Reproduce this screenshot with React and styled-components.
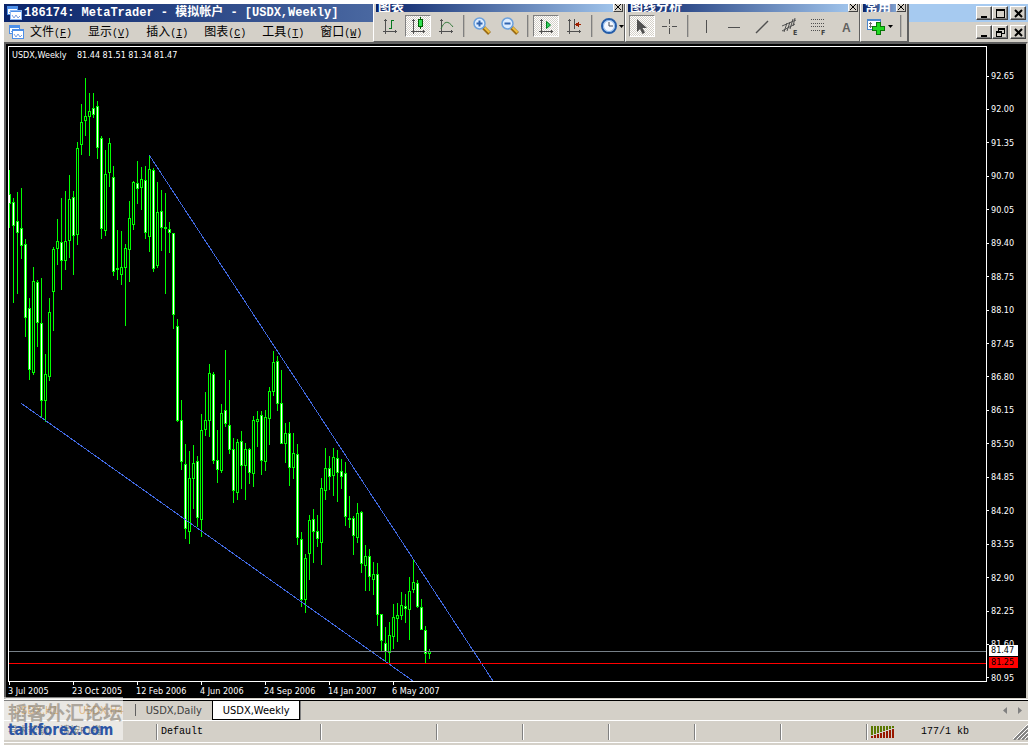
import React from 'react';
import styled, { createGlobalStyle } from 'styled-components';

const GlobalStyle = createGlobalStyle`
  * {
    box-sizing: border-box;
  }
  body {
    margin: 0;
    background: #fff;
    font-family: "DejaVu Sans Condensed", "Noto Sans", "Noto Sans CJK SC", sans-serif;
    font-size: 11px;
    color: #000;
  }
  button {
    margin: 0;
    padding: 0;
    border: 0;
    background: none;
    color: inherit;
    font: inherit;
  }
  svg {
    display: block;
  }
`;

const face = '#d4d0c8';
const mono = '"Liberation Mono", "Noto Sans CJK SC", monospace';

const Page = styled.main`
  padding: 4px 4px 0;
`;

const Window = styled.div`
  position: relative;
  overflow: hidden;
  background: ${face};
`;

const TitleBar = styled.header`
  display: flex;
  align-items: center;
  height: 18px;
  padding: 0 2px 0 3px;
  background: linear-gradient(to right, #0a246a, #a6caf0 88%);
  color: #fff;
`;

const Title = styled.h1`
  flex: 1;
  margin: 0 0 0 2px;
  font: bold 12px/18px ${mono};
  white-space: pre;
`;

const MenuBar = styled.nav`
  display: flex;
  align-items: center;
  height: 20px;
  padding: 0 2px 0 5px;
`;

const Menus = styled.div`
  display: flex;
  flex: 1;
  gap: 16px;
  margin-left: 6px;
`;

const MenuButton = styled.button`
  font: 12px/18px "Noto Sans CJK SC", sans-serif;
  white-space: nowrap;
  span {
    font: 10px/18px ${mono};
  }
`;

const Captions = styled.div`
  display: flex;
`;

const CaptionButton = styled.button`
  display: flex;
  align-items: center;
  justify-content: center;
  width: 16px;
  height: 14px;
  background: ${face};
  border: 1px solid;
  border-color: #fff #404040 #404040 #fff;
  box-shadow: inset -1px -1px 0 #808080;
  color: #000;
  &:last-child {
    margin-left: 2px;
  }
`;

const FloatingBars = styled.div`
  position: absolute;
  top: 0;
  left: 369px;
  display: flex;
  height: 38px;
`;

const ToolWindow = styled.section`
  overflow: hidden;
  background: ${face};
  border: solid;
  border-width: 0 ${props => (props.$last ? 2 : 1)}px 1px 1px;
  border-color: #fff #606060 #606060 #fff;
`;

const ToolTitle = styled.div`
  display: flex;
  align-items: flex-end;
  justify-content: space-between;
  height: 8px;
  margin: 0 1px 0 2px;
  padding-left: 2px;
  overflow: hidden;
  background: linear-gradient(to right, #0a246a, #a6caf0);
  color: #fff;
  font: bold 13px/13px "Noto Sans CJK SC", sans-serif;
`;

const ToolClose = styled.button`
  display: flex;
  align-items: center;
  justify-content: center;
  flex: none;
  width: 10px;
  height: 11px;
  background: ${face};
  border: 1px solid;
  border-color: #fff #404040 #404040 #fff;
  color: #000;
`;

const ToolRow = styled.div`
  display: flex;
  align-items: center;
  gap: 2px;
  padding: 3px ${props => props.$end || 0}px 4px 3px;
`;

const ToolButton = styled.button`
  display: flex;
  align-items: center;
  justify-content: center;
  width: ${props => (props.$wide ? 32 : 26)}px;
  height: 22px;
  border: 1px solid transparent;
  ${props => props.$pressed && `
    border-color: #808080 #fff #fff #808080;
    background: repeating-conic-gradient(#fff 0 25%, ${face} 0 50%) 0 0 / 2px 2px;
  `}
`;

const Divider = styled.span`
  width: 2px;
  height: 22px;
  margin: 0 2px;
  border-left: 1px solid #808080;
  border-right: 1px solid #b8b4ac;
`;

const ChartFrame = styled.section`
  display: grid;
  grid-template-columns: minmax(0, 1fr) 39px;
  padding: 2px 0 0 2px;
  background: #000;
  color: #fff;
  border: 2px solid;
  border-color: #606060 ${face} ${face} #606060;
  font-size: 9px;
  line-height: 12px;
`;

const Plot = styled.div`
  position: relative;
  border: 1px solid #fff;
`;

const Quote = styled.div`
  position: absolute;
  top: 2px;
  left: 3px;
  white-space: pre;
`;

const PriceAxis = styled.div`
  position: relative;
  grid-row: span 2;
  display: flex;
  flex-direction: column;
  justify-content: space-between;
  padding: 24px 0 14px;
`;

const Price = styled.div`
  display: flex;
  align-items: center;
  gap: 2px;
  height: 12px;
  &::before {
    content: "";
    width: 2px;
    height: 1px;
    background: #fff;
  }
`;

const PriceTag = styled.div`
  position: absolute;
  left: 2px;
  top: ${props => props.$top}px;
  width: 29px;
  height: 11px;
  padding-left: 2px;
  line-height: 11px;
  color: #000;
  background: ${props => props.$color};
`;

const TimeAxis = styled.div`
  display: flex;
  height: 16px;
  overflow: hidden;
`;

const Time = styled.div`
  flex: 0 0 64px;
  padding-top: 3px;
  white-space: nowrap;
  background: linear-gradient(#fff, #fff) 1px 0 / 1px 3px no-repeat;
`;

const TabBar = styled.div`
  display: flex;
  align-items: flex-start;
  height: 21px;
  border-top: 1px solid #000;
  border-bottom: 1px solid #fff;
  box-shadow: 0 -1px 0 #fff;
`;

const Tab = styled.button`
  height: 19px;
  padding: 0 10px;
  line-height: 17px;
  white-space: nowrap;
  color: ${props => (props.$active ? '#000' : props.$alert ? '#c07000' : '#404040')};
  ${props => props.$active && `
    background: #fff;
    border: solid #000;
    border-width: 0 1px 1px;
    box-shadow: 1px 0 0 #808080;
  `}
`;

const TabRule = styled.span`
  width: 1px;
  height: 12px;
  margin: 3px 0 0 1px;
  background: #606060;
`;

const TabScroll = styled.div`
  display: flex;
  gap: 11px;
  margin-left: auto;
  padding: 6px 6px 0 0;
`;

const StatusBar = styled.footer`
  display: flex;
  align-items: center;
  height: 22px;
  border-bottom: 1px solid #fff;
  font: 10px/16px ${mono};
`;

const StatusCell = styled.div`
  display: flex;
  align-items: center;
  flex: ${props => (props.$width ? `0 0 ${props.$width}px` : '1 1 0')};
  height: 16px;
  padding-left: 4px;
  overflow: hidden;
  white-space: nowrap;
  & + & {
    border-left: 1px solid #808080;
    box-shadow: inset 1px 0 0 #fff;
  }
`;

const Traffic = styled.span`
  margin-left: 26px;
`;

const BottomEdge = styled.div`
  height: 2px;
`;

const Watermark = styled.div`
  position: absolute;
  left: 0;
  bottom: 5px;
  width: 119px;
  height: 43px;
  padding: 5px 0 0 4px;
  background: rgba(255, 255, 255, 0.5);
  white-space: nowrap;
  pointer-events: none;
`;

const ForumName = styled.div`
  color: rgba(130, 122, 110, 0.6);
  font: bold 19px/20px "Noto Sans CJK SC", sans-serif;
`;

const ForumSite = styled.div`
  color: #2c55a4;
  font: bold 15px/16px "DejaVu Sans Condensed", "Noto Sans", sans-serif;
`;

const menus = [['文件', 'F'], ['显示', 'V'], ['插入', 'I'], ['图表', 'C'], ['工具', 'T'], ['窗口', 'W']];

const prices = [
  '92.65', '92.00', '91.35', '90.70', '90.05', '89.40', '88.75', '88.10', '87.45', '86.80',
  '86.15', '85.50', '84.85', '84.20', '83.55', '82.90', '82.25', '81.60', '80.95',
];

const times = ['3 Jul 2005', '23 Oct 2005', '12 Feb 2006', '4 Jun 2006', '24 Sep 2006', '14 Jan 2007', '6 May 2007'];

// high, body top, body bottom, low, 1 when the week closed down
const candles = [
  [170, 194, 204, 228, 1], [198, 202, 226, 303, 1], [192, 221, 233, 294, 1], [188, 228, 246, 259, 1],
  [239, 244, 318, 337, 1], [298, 308, 370, 380, 1], [267, 281, 373, 375, 0], [280, 282, 323, 347, 1],
  [278, 323, 401, 417, 1], [354, 374, 401, 422, 0], [298, 312, 377, 381, 0], [247, 249, 292, 331, 0],
  [219, 241, 249, 265, 0], [198, 242, 261, 290, 1], [191, 241, 261, 270, 0], [175, 199, 241, 258, 0],
  [191, 197, 236, 275, 1], [142, 148, 235, 245, 0], [104, 122, 145, 155, 0], [78, 116, 121, 136, 0],
  [93, 111, 117, 156, 0], [93, 108, 115, 118, 1], [101, 106, 148, 159, 1], [136, 138, 229, 239, 1],
  [150, 174, 231, 236, 0], [138, 143, 173, 187, 0], [166, 177, 272, 276, 1], [230, 268, 270, 280, 0],
  [231, 267, 275, 285, 0], [244, 248, 268, 326, 0], [201, 218, 250, 282, 0], [181, 182, 225, 230, 0],
  [161, 183, 189, 204, 1], [167, 179, 188, 210, 0], [166, 180, 233, 239, 1], [156, 169, 237, 252, 0],
  [168, 170, 269, 272, 1], [182, 212, 266, 268, 0], [190, 211, 228, 251, 1], [193, 227, 229, 294, 0],
  [222, 229, 233, 253, 1], [233, 233, 315, 329, 1], [319, 326, 421, 422, 1], [400, 420, 462, 470, 1],
  [444, 464, 529, 539, 1], [451, 478, 532, 544, 0], [445, 463, 479, 509, 0], [456, 461, 518, 527, 1],
  [414, 430, 520, 537, 0], [392, 420, 430, 436, 0], [364, 373, 421, 437, 0], [372, 374, 461, 464, 1],
  [430, 460, 470, 483, 1], [404, 413, 471, 473, 0], [350, 410, 424, 427, 1], [380, 425, 450, 454, 1],
  [438, 449, 491, 503, 1], [439, 442, 493, 500, 0], [431, 441, 466, 489, 1], [443, 449, 466, 500, 0],
  [448, 449, 473, 484, 1], [416, 420, 474, 487, 0], [411, 419, 422, 447, 0], [411, 415, 461, 475, 1],
  [410, 417, 462, 471, 0], [387, 391, 419, 445, 0], [351, 362, 392, 396, 0], [356, 361, 404, 411, 1],
  [370, 403, 444, 444, 1], [423, 433, 444, 463, 0], [422, 433, 468, 486, 1], [433, 453, 468, 479, 0],
  [444, 454, 538, 545, 1], [532, 539, 600, 607, 1], [554, 558, 600, 613, 0], [515, 520, 554, 580, 0],
  [509, 519, 532, 563, 1], [515, 531, 539, 547, 1], [478, 488, 543, 565, 0], [448, 468, 491, 500, 0],
  [456, 468, 477, 490, 1], [448, 457, 476, 496, 0], [450, 458, 473, 502, 1], [459, 471, 477, 489, 1],
  [462, 473, 517, 526, 1], [496, 518, 520, 528, 0], [516, 518, 536, 555, 1], [503, 513, 538, 543, 0],
  [511, 512, 564, 573, 1], [545, 556, 566, 591, 0], [549, 556, 577, 591, 1], [562, 574, 580, 595, 0],
  [563, 574, 615, 626, 1], [614, 614, 641, 651, 1], [627, 643, 652, 662, 1], [622, 635, 653, 663, 0],
  [604, 617, 637, 649, 0], [603, 615, 619, 642, 0], [592, 605, 616, 620, 0], [594, 606, 609, 623, 1],
  [577, 591, 610, 640, 0], [559, 582, 590, 593, 0], [580, 583, 607, 608, 1], [599, 607, 630, 630, 1],
  [626, 630, 654, 663, 1], [649, 651, 654, 659, 0],
];

const Candle = ({ x, data: [high, top, bottom, low, down] }) => (
  <g>
    <rect x={x} y={high} width="1" height={low - high} fill="#0f0" />
    <rect x={x - 1} y={top} width="3" height={bottom - top} fill="#0f0" />
    {bottom - top > 2 && (
      <rect x={x} y={top + 1} width="1" height={bottom - top - 2} fill={down ? '#fff' : '#000'} />
    )}
  </g>
);

const CandleChart = () => (
  <svg width="100%" height="634" shapeRendering="crispEdges" role="img" aria-label="USDX,Weekly">
    <g transform="translate(-9 -47)">
      {candles.map((data, i) => <Candle key={i} x={9 + i * 4} data={data} />)}
      <path d="M149.5 155.5 493 681M21.5 403.5 413 681" stroke="#4169e1" fill="none" />
    </g>
    <rect y="604" width="100%" height="1" fill="#778088" />
    <rect y="616" width="100%" height="1" fill="#f00" />
  </svg>
);

const AppIcon = ({ light }) => (
  <svg width="15" height="14" viewBox="0 0 15 14" shapeRendering="crispEdges">
    <rect x="0.5" y="0.5" width="10" height="8" fill="#fff" stroke="#4d8fe8" />
    <path d="M1 2h9" stroke="#4d8fe8" strokeWidth="2" />
    <path d="M2 6h1V5h2v1h2V5h2" stroke="#6ea5ec" fill="none" />
    <rect x="3.5" y="4.5" width="11" height="9" fill="#fff" stroke={light ? '#8cb8f4' : '#4d8fe8'} />
    <path d="M4 5.5h10" stroke="#4d8fe8" />
    <path d="M5 9l2 3 2-3 2 3 2-2" stroke="#7a9fe0" fill="none" shapeRendering="auto" />
  </svg>
);

const captionPaths = {
  minimize: <path d="M1 8h6" strokeWidth="2" />,
  maximize: <path d="M.5 1.5h8v7h-8zM0 .5h9" />,
  restore: <path d="M2.5 3V.5h6v5H6M2 1.5h7M.5 3.5h5v5h-5zM0 4.5h6" />,
  close: <path d="M1 1l7 7M8 1L1 8" strokeWidth="2" shapeRendering="auto" />,
};

const Caption = ({ kind, label }) => (
  <CaptionButton aria-label={label}>
    <svg width="9" height="9" viewBox="0 0 9 9" fill="none" stroke="#000" shapeRendering="crispEdges">
      {captionPaths[kind]}
    </svg>
  </CaptionButton>
);

const Axes = () => (
  <path d="M4.5 2v15M2 14.5h14M3 3.5h3M14.500 13v3" stroke="#505050" fill="none" />
);

const Magnifier = ({ plus }) => (
  <g shapeRendering="auto">
    <path d="M10.5 10.5l6 6" stroke="#9a6b14" strokeWidth="4" />
    <path d="M11.5 10.5l5 5" stroke="#f0c040" strokeWidth="2" />
    <circle cx="6.5" cy="6.5" r="5.5" fill="#dcecff" stroke="#6ba0dc" strokeWidth="1.5" />
    <path d={plus ? 'M3.5 6.5h6M6.5 3.5v6' : 'M3.5 6.5h6'} stroke="#3064b0" strokeWidth="2" />
  </g>
);

const Caret = ({ x }) => <path d={`M${x} 8h5l-2.5 3z`} fill="#000" shapeRendering="auto" />;

const toolIcons = {
  bars: <><Axes /><path d="M8 11.5h2.500M10.500 12V3M10.500 3.500H13" stroke="#087820" fill="none" /></>,
  candles: (
    <>
      <Axes />
      <path d="M11.5 0v12" stroke="#006000" />
      <rect x="9.5" y="2.5" width="4" height="7" fill="#30e050" stroke="#006000" />
    </>
  ),
  line: <><Axes /><path d="M4 12C7 4 11 3 16 10" stroke="#307838" fill="none" shapeRendering="auto" /></>,
  zoomIn: <Magnifier plus />,
  zoomOut: <Magnifier />,
  scroll: <><Axes /><path d="M9.5 4.500v7l4-3.500z" fill="#30d060" stroke="#008020" shapeRendering="auto" /></>,
  shift: (
    <>
      <Axes />
      <path d="M9.5 2v10" stroke="#505050" />
      <path d="M11 7.5h5" stroke="#a02000" />
      <path d="M10 7.5l4-3v6z" fill="#a02000" />
    </>
  ),
  clock: (
    <g shapeRendering="auto">
      <circle cx="8" cy="9" r="7" fill="#f4f8ff" stroke="#245ca8" strokeWidth="2" />
      <circle cx="8" cy="9" r="5.5" fill="none" stroke="#82b4ee" />
      <path d="M8 5v4h4" stroke="#404858" fill="none" />
    </g>
  ),
  cursor: (
    <path d="M4 2v13l3-3 2.5 5 2.5-1.5L9.5 11H14z" fill="#505050" shapeRendering="auto" />
  ),
  cross: <path d="M8.5 2v5M8.5 11v6M1 9.5h5M11 9.5h5M8 9.5h1" stroke="#505050" />,
  vertical: <path d="M9.5 3v13" stroke="#505050" />,
  horizontal: <path d="M3 10.5h12" stroke="#505050" />,
  trend: <path d="M3 16L15 4" stroke="#505050" strokeWidth="1.5" shapeRendering="auto" />,
  channel: (
    <g shapeRendering="auto">
      <path d="M1 9L15 3M1 14l13-7M3 15l3-9M6 14l3-9M9 12l3-10M12 9l2-8" stroke="#505050" fill="none" />
      <text x="12" y="18" fontSize="7" fontWeight="bold" fill="#404040">E</text>
    </g>
  ),
  fibo: (
    <>
      <path d="M2 2.5h14M2 6.5h14M2 9.5h14M2 13.5h9" stroke="#505050" strokeDasharray="1 1" />
      <text x="12" y="18" fontSize="7" fontWeight="bold" fill="#404040">F</text>
    </>
  ),
  text: <text x="5" y="15" fontSize="12" fontFamily="Liberation Sans" fontWeight="bold" fill="#606060">A</text>,
};

const Tool = ({ icon, label, pressed }) => (
  <ToolButton $pressed={pressed} aria-label={label} aria-pressed={pressed}>
    <svg width="18" height="18" viewBox="0 0 18 18" shapeRendering="crispEdges" overflow="visible">
      {toolIcons[icon]}
      {icon === 'clock' && <Caret x={18} />}
    </svg>
  </ToolButton>
);

const FloatTitle = ({ children }) => (
  <ToolTitle>
    <span>{children}</span>
    <ToolClose aria-label="关闭">
      <svg width="6" height="6" viewBox="0 0 6 6" stroke="#000"><path d="M0 0l6 6M6 0L0 6" /></svg>
    </ToolClose>
  </ToolTitle>
);

const Toolbars = () => (
  <FloatingBars>
    <ToolWindow>
      <FloatTitle>图表</FloatTitle>
      <ToolRow $end={1}>
        <Tool icon="bars" label="柱状图" />
        <Tool icon="candles" label="蜡烛图" pressed />
        <Tool icon="line" label="折线图" />
        <Divider />
        <Tool icon="zoomIn" label="放大" />
        <Tool icon="zoomOut" label="缩小" />
        <Divider />
        <Tool icon="scroll" label="自动滚动" pressed />
        <Tool icon="shift" label="图表平移" />
        <Divider />
        <Tool icon="clock" label="时间周期" />
      </ToolRow>
    </ToolWindow>
    <ToolWindow>
      <FloatTitle>图线分析</FloatTitle>
      <ToolRow>
        <Tool icon="cursor" label="光标" pressed />
        <Tool icon="cross" label="十字准线" />
        <Divider />
        <Tool icon="vertical" label="垂直线" />
        <Tool icon="horizontal" label="水平线" />
        <Tool icon="trend" label="趋势线" />
        <Tool icon="channel" label="等距通道" />
        <Tool icon="fibo" label="斐波纳契" />
        <Tool icon="text" label="文字" />
      </ToolRow>
    </ToolWindow>
    <ToolWindow $last>
      <FloatTitle>常用</FloatTitle>
      <ToolRow $end={3}>
        <ToolButton $wide aria-label="新图表">
          <svg width="28" height="18" viewBox="0 0 28 18" shapeRendering="crispEdges">
            <rect x="1.5" y="2.5" width="13" height="10" fill="#fff" stroke="#4a86cc" />
            <path d="M1 3h14" stroke="#4a86cc" strokeWidth="2" />
            <path d="M4.5 5v6M3 6.5h3M3 9.5h3" stroke="#707070" />
            <path d="M10.500 5.500h4v4h4v4h-4v4h-4v-4h-4v-4h4z" fill="#20d820" stroke="#087808" />
            <Caret x={22} />
          </svg>
        </ToolButton>
        <Divider />
      </ToolRow>
    </ToolWindow>
  </FloatingBars>
);

const SignalBars = () => (
  <svg width="24" height="12" viewBox="0 0 24 12" shapeRendering="crispEdges">
    {[0, 1, 2, 3, 4, 5, 6, 7].map(i => (
      <g key={i}>
        <rect x={i * 3} y="0" width="2" height={9 - i} fill="#5a7800" />
        <rect x={i * 3} y={10 - i} width="2" height={2 + i} fill="#981800" />
      </g>
    ))}
  </svg>
);

const App = () => (
  <Page>
    <GlobalStyle />
    <Window>
      <TitleBar>
        <AppIcon light />
        <Title>186174: MetaTrader - 模拟帐户 - [USDX,Weekly]</Title>
        <Captions>
          <Caption kind="minimize" label="最小化" />
          <Caption kind="maximize" label="最大化" />
          <Caption kind="close" label="关闭" />
        </Captions>
      </TitleBar>
      <MenuBar>
        <AppIcon />
        <Menus>
          {menus.map(([name, key]) => (
            <MenuButton key={key}>{name}<span>(<u>{key}</u>)</span></MenuButton>
          ))}
        </Menus>
        <Captions>
          <Caption kind="minimize" label="最小化图表" />
          <Caption kind="restore" label="还原图表" />
          <Caption kind="close" label="关闭图表" />
        </Captions>
      </MenuBar>
      <Toolbars />
      <ChartFrame>
        <Plot>
          <CandleChart />
          <Quote>USDX,Weekly    81.44 81.51 81.34 81.47</Quote>
        </Plot>
        <PriceAxis>
          {prices.map(price => <Price key={price}>{price}</Price>)}
          <PriceTag $top={599} $color="#fff">81.47</PriceTag>
          <PriceTag $top={611} $color="#f00">81.25</PriceTag>
        </PriceAxis>
        <TimeAxis>
          {times.map(time => <Time key={time}>{time}</Time>)}
        </TimeAxis>
      </ChartFrame>
      <TabBar>
        <Tab $alert>USDX,H1</Tab>
        <Tab $alert>USDX,H4</Tab>
        <TabRule />
        <Tab>USDX,Daily</Tab>
        <Tab $active>USDX,Weekly</Tab>
        <TabScroll>
          <svg width="4" height="7" viewBox="0 0 4 7"><path d="M4 0v7L0 3.500z" fill="#808080" /></svg>
          <svg width="4" height="7" viewBox="0 0 4 7"><path d="M0 0v7l4-3.500z" fill="#808080" /></svg>
        </TabScroll>
      </TabBar>
      <StatusBar>
        <StatusCell $width={152}>寻求帮助, 请按F1键</StatusCell>
        <StatusCell $width={164}>Default</StatusCell>
        <StatusCell $width={116} />
        <StatusCell $width={86} />
        <StatusCell $width={86} />
        <StatusCell $width={86} />
        <StatusCell $width={86} />
        <StatusCell $width={86} />
        <StatusCell>
          <SignalBars />
          <Traffic>177/1 kb</Traffic>
        </StatusCell>
        <svg width="15" height="16" viewBox="0 0 15 16">
          <path d="M1 16L15 2M5 16L15 6M9 16l6-6M13 16l2-2" stroke="#808080" strokeWidth="2" />
          <path d="M0 15L15 0M4 15L15 4M8 15l7-7M12 15l3-3" stroke="#fff" />
        </svg>
      </StatusBar>
      <BottomEdge />
      <Watermark>
        <ForumName>韬客外汇论坛</ForumName>
        <ForumSite>talkforex.com</ForumSite>
      </Watermark>
    </Window>
  </Page>
);

export default App;
